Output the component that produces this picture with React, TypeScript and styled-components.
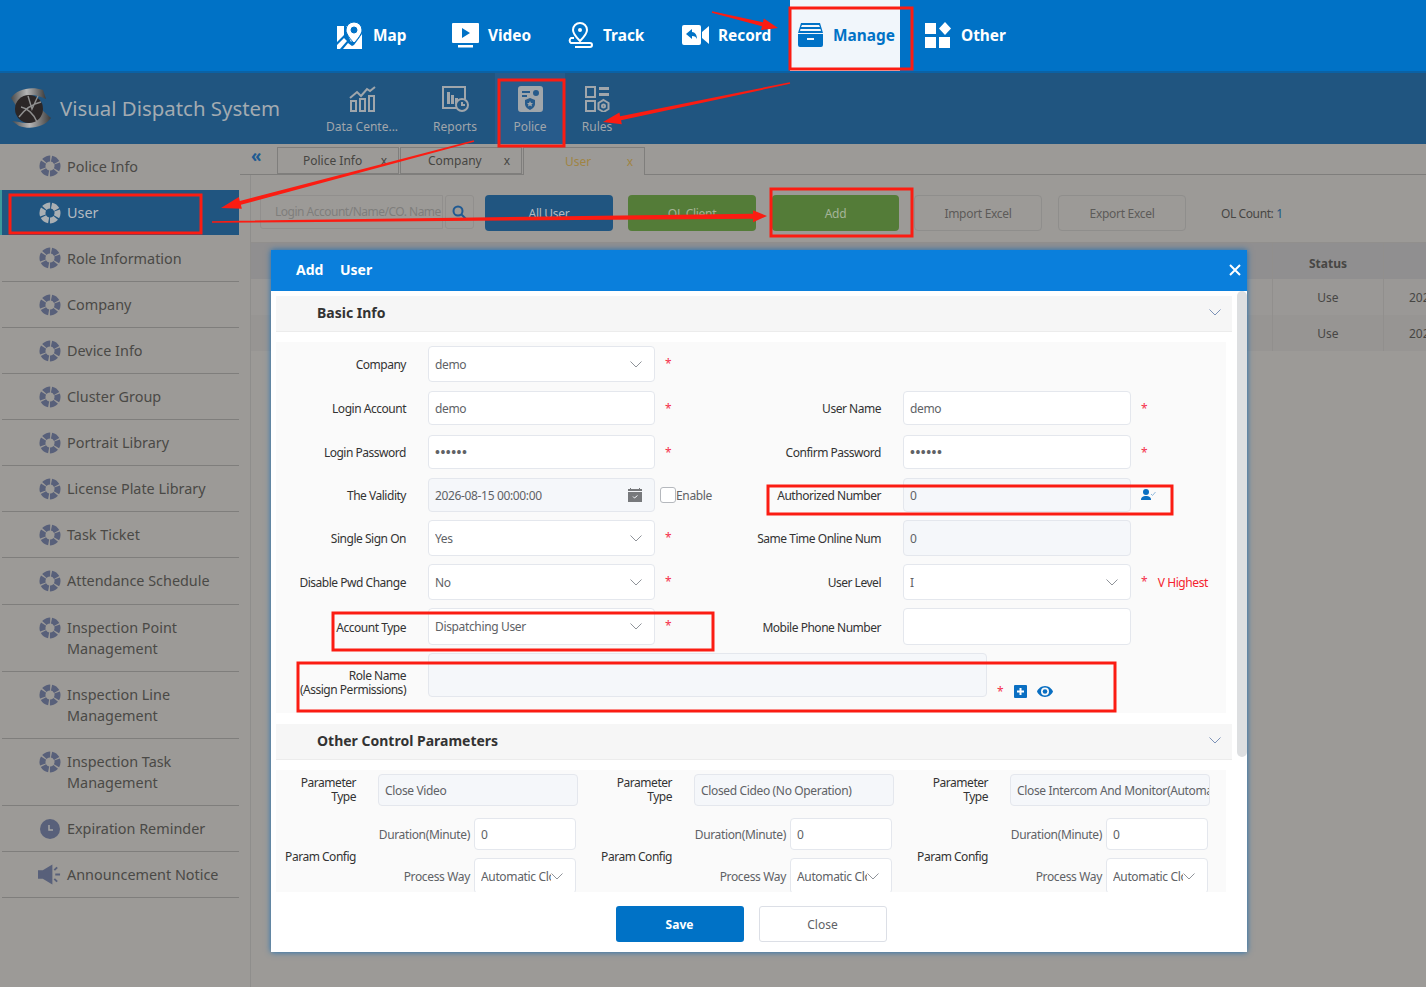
import styled, { createGlobalStyle } from 'styled-components';

const GlobalStyle = createGlobalStyle`
  html, body {
    margin: 0;
    padding: 0;
    overflow: hidden;
    background: #9c9a97;
    font-family: "Noto Sans", "Open Sans", sans-serif;
  }
  * {
    box-sizing: border-box;
  }
`;

const Page = styled.div`
  position: relative;
  width: 1426px;
  height: 987px;
  overflow: hidden;
  display: flex;
  flex-direction: column;
`;

const TopBar = styled.div`
  height: 73px;
  background: #0072c6;
  border-bottom: 2px solid #0a62a6;
  padding-left: 330px;
  display: flex;
`;

const NavItem = styled.div<{ $active?: boolean }>`
  display: flex;
  align-items: center;
  width: ${(p) => (p.$active ? '110px' : '115px')};
  margin-right: ${(p) => (p.$active ? '18px' : '0')};
  height: 71px;
  padding: 0 0 1px 7px;
  background: ${(p) => (p.$active ? '#f1f6fb' : 'transparent')};
  color: ${(p) => (p.$active ? '#0072c6' : '#fff')};
  font-size: 15.4px;
  font-weight: 700;
`;

const NavIcon = styled.span`
  width: 36px;
  display: flex;
  align-items: center;
`;

const SubBar = styled.div`
  height: 71px;
  background: #205580;
  display: flex;
`;

const Brand = styled.div`
  width: 316px;
  padding: 0 0 2px 9px;
  display: flex;
  align-items: center;
  gap: 9px;
  color: #a3abb1;
  font-size: 20.4px;
`;

const SubItem = styled.div<{ $w: number; $ml?: number; $active?: boolean }>`
  width: ${(p) => p.$w}px;
  margin-left: ${(p) => p.$ml ?? 0}px;
  background: ${(p) => (p.$active ? '#275b8b' : 'transparent')};
  display: flex;
  flex-direction: column;
  align-items: center;
  padding-top: 13px;
  color: #a0a6ab;
  font-size: 12px;
`;

const SubLabel = styled.span`
  margin-top: 6px;
  white-space: nowrap;
`;

const Main = styled.div`
  flex: 1;
  display: flex;
  background: #9c9a97;
`;

const Sidebar = styled.div`
  width: 240px;
  flex-shrink: 0;
`;

const SideItem = styled.div<{ $active?: boolean; $h: number; $plain?: boolean; $nudge?: number }>`
  height: ${(p) => p.$h}px;
  width: ${(p) => (p.$active ? '239px' : '237px')};
  margin-left: ${(p) => (p.$active ? '0' : '2px')};
  display: flex;
  align-items: ${(p) => (p.$h > 50 ? 'flex-start' : 'center')};
  padding-left: ${(p) => (p.$active ? '38px' : '36px')};
  padding-top: ${(p) => (p.$h > 50 ? 12 : p.$nudge && p.$nudge > 0 ? p.$nudge : 0)}px;
  padding-bottom: ${(p) => (p.$nudge && p.$nudge < 0 ? -p.$nudge : 0)}px;
  gap: 6px;
  font-size: 14.4px;
  line-height: 21px;
  color: ${(p) => (p.$active ? '#b4bac0' : '#4a4946')};
  background: ${(p) => (p.$active ? '#205580' : 'transparent')};
  border-bottom: ${(p) => (p.$plain || p.$active ? 'none' : '1px solid #7f7e7c')};
  box-shadow: ${(p) => (p.$active ? 'inset 2px 0 0 #3c9a9c' : 'none')};
`;

const SideIcon = styled.span`
  width: 23px;
  height: 22px;
  flex-shrink: 0;
  display: flex;
  align-items: center;
  justify-content: center;
`;

const SideText = styled.span`
  white-space: pre-line;
`;

const Content = styled.div`
  flex: 1;
  display: flex;
  flex-direction: column;
  min-width: 0;
`;

const TabRow = styled.div`
  height: 31px;
  padding: 3px 0 0 11px;
  border-bottom: 1px solid #7f7e7c;
  display: flex;
  gap: 1px;
`;

const Collapse = styled.span`
  width: 23px;
  margin-right: 2px;
  color: #205a92;
  font-size: 17px;
  font-weight: 700;
  line-height: 18px;
`;

const Tab = styled.div<{ $active?: boolean; $pl: number }>`
  width: 122px;
  height: ${(p) => (p.$active ? '28px' : '27px')};
  padding: 0 11px 0 ${(p) => p.$pl}px;
  display: flex;
  align-items: center;
  justify-content: space-between;
  font-size: 12px;
  color: ${(p) => (p.$active ? '#a08444' : '#464542')};
  background: #9c9a97;
  border: 1px solid #7f7e7c;
  border-bottom: ${(p) => (p.$active ? 'none' : '1px solid #7f7e7c')};
`;

const Panel = styled.div`
  flex: 1;
  margin-left: 10px;
  border-left: 1px solid #8f8e8c;
`;

const Toolbar = styled.div`
  margin-top: 20px;
  padding-left: 9px;
  height: 36px;
  display: flex;
  align-items: flex-start;
`;

const SearchBox = styled.div`
  width: 183px;
  height: 34px;
  padding-left: 14px;
  border: 1px solid #918f8d;
  border-radius: 3px 0 0 3px;
  color: #7f7e7c;
  font-size: 12px;
  letter-spacing: -0.5px;
  line-height: 32px;
  white-space: nowrap;
  overflow: hidden;
`;

const SearchButton = styled.div`
  width: 29px;
  height: 34px;
  margin-left: 2px;
  border: 1px solid #918f8d;
  border-radius: 3px;
  display: flex;
  align-items: center;
  justify-content: center;
`;

const ToolButton = styled.div<{ $bg?: string; $fg: string; $ml: number; $w?: number }>`
  width: ${(p) => p.$w ?? 128}px;
  height: 36px;
  margin-left: ${(p) => p.$ml}px;
  background: ${(p) => p.$bg ?? 'transparent'};
  border: ${(p) => (p.$bg ? 'none' : '1px solid #8f8e8c')};
  border-radius: 4px;
  color: ${(p) => p.$fg};
  font-size: 12px;
  letter-spacing: -0.3px;
  display: flex;
  align-items: center;
  justify-content: center;
`;

const OnlineCount = styled.div`
  margin-left: 35px;
  height: 36px;
  font-size: 12px;
  letter-spacing: -0.4px;
  line-height: 37px;
  color: #474644;

  b {
    font-weight: 400;
    color: #205580;
  }
`;

const Table = styled.div`
  margin-top: 11px;
  border-top: 1px solid #918f8d;
`;

const TableRow = styled.div<{ $head?: boolean; $alt?: boolean }>`
  height: 36px;
  display: flex;
  background: ${(p) => (p.$head ? '#908f90' : p.$alt ? '#979593' : '#9a9896')};
  font-size: 12px;
  font-weight: ${(p) => (p.$head ? 700 : 400)};
  color: #474644;
`;

const Spacer = styled.div`
  flex: 1;
`;

const Cell = styled.div<{ $w: number; $left?: boolean; $head?: boolean }>`
  width: ${(p) => p.$w}px;
  flex-shrink: 0;
  display: flex;
  align-items: center;
  justify-content: ${(p) => (p.$left ? 'flex-start' : 'center')};
  padding-left: ${(p) => (p.$left ? '25px' : '0')};
  padding-top: ${(p) => (p.$head ? '4px' : '0')};
  border-left: 1px solid #918f8d;
  white-space: nowrap;
  overflow: hidden;
`;

const Modal = styled.div`
  position: absolute;
  left: 271px;
  top: 250px;
  width: 976px;
  height: 702px;
  background: #fff;
  box-shadow: 0 0 6px #1b6fb5;
  display: flex;
  flex-direction: column;
`;

const ModalHeader = styled.div`
  height: 41px;
  flex-shrink: 0;
  background: #0a7fdc;
  color: #fff;
  padding: 0 5px 2px 25px;
  display: flex;
  align-items: center;
  justify-content: space-between;
  font-size: 14px;
  font-weight: 700;
  word-spacing: 0.5px;
  white-space: pre;
`;

const ModalBody = styled.div`
  position: relative;
  height: 601px;
  flex-shrink: 0;
  overflow: hidden;
  padding: 5px 15px 0 5px;
`;

const ScrollThumb = styled.div`
  position: absolute;
  right: 0;
  top: 0;
  width: 10px;
  height: 466px;
  background: #dddfe1;
  border-radius: 5px;
`;

const SectionHead = styled.div`
  height: 36px;
  padding: 0 11px 2px 41px;
  background: #f6f6f6;
  border-bottom: 1px solid #ececec;
  display: flex;
  align-items: center;
  justify-content: space-between;
  font-size: 14px;
  font-weight: 700;
  color: #333;
`;

const FormArea = styled.div<{ $mb?: number }>`
  margin: 10px 6px ${(p) => p.$mb ?? 0}px 0;
  padding: 4px 0 16px;
  background: #fafafa;
`;

const FormRow = styled.div<{ $h: number; $gap?: number }>`
  height: ${(p) => p.$h}px;
  margin-bottom: ${(p) => p.$gap ?? 8}px;
  display: flex;
`;

const LeftCell = styled.div`
  width: 445px;
  flex-shrink: 0;
  display: flex;
`;

const RightCell = styled.div`
  flex: 1;
  display: flex;
`;

const FieldLabel = styled.div<{ $w: number; $pt?: number }>`
  width: ${(p) => p.$w}px;
  margin-right: 22px;
  padding-top: ${(p) => p.$pt ?? 2}px;
  flex-shrink: 0;
  display: flex;
  align-items: center;
  justify-content: flex-end;
  text-align: right;
  font-size: 12px;
  letter-spacing: -0.48px;
  line-height: 14px;
  color: #333;
  white-space: pre-line;
`;

const Control = styled.div<{ $w: number; $off?: boolean; $flush?: boolean }>`
  width: ${(p) => p.$w}px;
  flex-shrink: 0;
  padding: 0 ${(p) => (p.$flush ? '0' : '12px')} 0 6px;
  background: ${(p) => (p.$off ? '#f5f7fa' : '#fff')};
  border: 1px solid #e4e7ed;
  border-radius: 4px;
  display: flex;
  align-items: center;
  justify-content: space-between;
  font-size: 12px;
  letter-spacing: -0.35px;
  color: #606266;
  white-space: nowrap;
  overflow: hidden;
`;

const ControlText = styled.span`
  overflow: hidden;
  flex: 1;
  min-width: 0;
`;

const Dots = styled.span`
  font-size: 13px;
  letter-spacing: 0.5px;
  font-weight: 700;
`;

const Star = styled.span`
  margin: 10px 0 0 10px;
  color: #f5304a;
  font-size: 12px;
  line-height: 16px;
`;

const Hint = styled.span`
  margin: 0 0 0 10px;
  align-self: center;
  color: #f5222d;
  font-size: 12px;
  letter-spacing: -0.4px;
`;

const EnableLabel = styled.label`
  margin-left: 5px;
  display: flex;
  align-items: center;
  font-size: 12px;
  letter-spacing: -0.35px;
  color: #606266;
`;

const CheckBox = styled.span`
  width: 16px;
  height: 16px;
  background: #fff;
  border: 1px solid #b5b8bd;
  border-radius: 3px;
`;

const RoleTools = styled.div`
  align-self: flex-end;
  margin: 0 0 -3px 10px;
  display: flex;
  align-items: center;
  gap: 10px;
`;

const RoleStar = styled.span`
  color: #f5304a;
  font-size: 12px;
`;

const ParamGrid = styled.div`
  margin: 10px 6px 0 0;
  padding-top: 4px;
  background: #fafafa;
  display: grid;
  grid-template-columns: repeat(3, 316px);
  height: 200px;
`;

const ParamCol = styled.div`
  display: flex;
  flex-direction: column;
`;

const ParamRow = styled.div`
  height: 32px;
  display: flex;
`;

const ConfigRow = styled.div`
  margin-top: 12px;
  display: flex;
`;

const ConfigFields = styled.div`
  display: flex;
  flex-direction: column;
  gap: 8px;
`;

const ConfigField = styled.div<{ $h: number }>`
  display: flex;
  height: ${(p) => p.$h}px;
`;

const ConfigFieldLabel = styled.div`
  width: 92px;
  margin-right: 4px;
  font-size: 12px;
  letter-spacing: -0.35px;
  display: flex;
  align-items: center;
  justify-content: flex-end;
  color: #606266;
  white-space: nowrap;
`;

const ConfigLabel = styled.div`
  width: 80px;
  margin: 32px 22px 0 0;
  text-align: right;
  font-size: 12px;
  letter-spacing: -0.48px;
  line-height: 14px;
  color: #333;
  white-space: nowrap;
`;

const ModalFooter = styled.div`
  flex: 1;
  display: flex;
  justify-content: center;
  padding: 14px 16px 0 0;
  gap: 15px;
`;

const FooterButton = styled.div<{ $primary?: boolean }>`
  width: 128px;
  height: 36px;
  border-radius: 3px;
  background: ${(p) => (p.$primary ? '#0072c6' : '#fff')};
  border: ${(p) => (p.$primary ? 'none' : '1px solid #dcdfe6')};
  color: ${(p) => (p.$primary ? '#fff' : '#606266')};
  font-size: 12px;
  font-weight: ${(p) => (p.$primary ? 700 : 400)};
  display: flex;
  align-items: center;
  justify-content: center;
`;

const Annotations = styled.svg`
  position: absolute;
  left: 0;
  top: 0;
  pointer-events: none;
`;

const MapIcon = () => (
  <svg width="26" height="27" viewBox="0 0 26 27" fill="#fff">
    <path d="M0 4h7v9L0 20zM0 23l7-7 3 3-7 8H0zM9 4l3 0 5 11 0 1-3 4-5-11zM6 27l5-6 4 3 2-1 3-4 5-7v15z" />
    <path fillRule="evenodd" d="M17 0a8 8 0 0 1 8 8c0 4-5 10-8 13-3-3-8-9-8-13a8 8 0 0 1 8-8zm0 5a3 3 0 1 0 0 6 3 3 0 0 0 0-6z" stroke="#0072c6" strokeWidth="1" />
  </svg>
);

const VideoIcon = () => (
  <svg width="27" height="25" viewBox="0 0 27 25" fill="#fff">
    <path fillRule="evenodd" d="M1 0h25a1 1 0 0 1 1 1v18a1 1 0 0 1-1 1H1a1 1 0 0 1-1-1V1a1 1 0 0 1 1-1zm9 5v10l8-5z" />
    <rect x="6" y="22" width="15" height="2.5" />
  </svg>
);

const TrackIcon = () => (
  <svg width="27" height="27" viewBox="0 0 27 27" fill="none" stroke="#fff" strokeWidth="2">
    <path d="M13 1a7 7 0 0 1 7 7c0 4-4 8-7 11-3-3-7-7-7-11a7 7 0 0 1 7-7z" />
    <circle cx="13" cy="8" r="2" fill="#fff" stroke="none" />
    <path d="M7 17H4a3 3 0 0 0 0 5h19a2 2 0 0 1 0 4H8" transform="translate(0 -1)" />
  </svg>
);

const RecordIcon = () => (
  <svg width="27" height="22" viewBox="0 0 27 22" fill="#fff">
    <path fillRule="evenodd" d="M2 1h15a2 2 0 0 1 2 2v16a2 2 0 0 1-2 2H2a2 2 0 0 1-2-2V3a2 2 0 0 1 2-2zm8 4L4 10l6 5v-3c3 0 4 1 5 3 0-4-2-7-5-7z" />
    <path d="M20 8l7-6v18l-7-6z" />
  </svg>
);

const ManageIcon = () => (
  <svg width="27" height="24" viewBox="0 0 27 24" fill="#0072c6">
    <path fillRule="evenodd" d="M4 0h19l3 10H1zm1 2-1 2h19l-1-2zM3.500 6l-.5 2h21l-.5-2z" />
    <path fillRule="evenodd" d="M1 11h25v11a2 2 0 0 1-2 2H3a2 2 0 0 1-2-2zm9 4v2h7v-2z" />
  </svg>
);

const OtherIcon = () => (
  <svg width="26" height="26" viewBox="0 0 26 26" fill="#fff">
    <rect x="0" y="1" width="11" height="11" />
    <path d="M20 0l6 6.500-6 6.500-6-6.500z" />
    <rect x="0" y="15" width="11" height="11" />
    <rect x="14" y="15" width="11" height="11" />
  </svg>
);

const LogoMark = () => (
  <svg width="42" height="42" viewBox="0 0 42 42">
    <defs>
      <linearGradient id="chrome" x1="0" y1="0" x2="1" y2="0">
        <stop offset="0" stopColor="#4a4a4a" />
        <stop offset="0.45" stopColor="#b5b5b5" />
        <stop offset="1" stopColor="#3a3a3a" />
      </linearGradient>
    </defs>
    <path d="M2 11C8 2 22-1 34 3l3 9-5-2C22 6 12 9 8 20z" fill="url(#chrome)" />
    <path d="M42 31c-7 9-20 12-32 8l-7-5 7 1c10 3 19 0 23-12z" fill="url(#chrome)" />
    <circle cx="20" cy="22" r="14" fill="#2b2626" />
    <path d="M10 30c6-8 13-13 22-15M12 20c6 1 13 7 16 15M19 9l4 13 6-13" fill="none" stroke="#8f8f8f" strokeWidth="1.400" />
  </svg>
);

const DataIcon = () => (
  <svg width="27" height="26" viewBox="0 0 27 26" fill="none" stroke="#a0a6ab" strokeWidth="2">
    <path d="M1 12l7-6 4 4 6-7 3 2 5-4" />
    <rect x="2" y="15" width="5" height="10" />
    <rect x="11" y="13" width="5" height="12" />
    <rect x="20" y="10" width="5" height="15" />
  </svg>
);

const ReportsIcon = () => (
  <svg width="27" height="26" viewBox="0 0 27 26" fill="none" stroke="#a0a6ab" strokeWidth="2">
    <path d="M14 22H1V1h22v12" />
    <rect x="5" y="6" width="3" height="12" fill="#a0a6ab" stroke="none" />
    <rect x="9" y="9" width="3" height="9" fill="#a0a6ab" stroke="none" />
    <rect x="13" y="12" width="3" height="6" fill="#a0a6ab" stroke="none" />
    <circle cx="20" cy="19" r="6" fill="#205580" />
    <path d="M20 16v3h3" />
  </svg>
);

const PoliceIcon = () => (
  <svg width="25" height="26" viewBox="0 0 25 26">
    <path fillRule="evenodd" fill="#a0a6ab" d="M3 0h19a3 3 0 0 1 3 3v20a3 3 0 0 1-3 3H3a3 3 0 0 1-3-3V3a3 3 0 0 1 3-3zm15 4a3 3 0 1 0 0 6 3 3 0 0 0 0-6zM4 5v2h8V5zm0 4v2h5V9zm8 3-5 2v4c0 3 3 5 5 6 2-1 5-3 5-6v-4z" />
    <path fill="#a0a6ab" d="M12 15l1 2h2l-1.500 1.500.5 2-2-1-2 1 .5-2L9 17h2z" />
  </svg>
);

const RulesIcon = () => (
  <svg width="25" height="26" viewBox="0 0 25 26" fill="none" stroke="#a0a6ab" strokeWidth="2">
    <rect x="1" y="1" width="9" height="10" />
    <rect x="1" y="15" width="9" height="10" />
    <rect x="14" y="1" width="10" height="3" fill="#a0a6ab" stroke="none" />
    <rect x="14" y="7" width="10" height="3" fill="#a0a6ab" stroke="none" />
    <path d="M18.500 14l5 3v6l-5 3-5-3v-6z" />
    <circle cx="18.500" cy="20" r="1.500" />
  </svg>
);

const RingIcon = ({ color }: { color: string }) => (
  <svg width="22" height="22" viewBox="0 0 22 22" fill="none">
    <circle cx="11" cy="11" r="7.500" stroke={color} strokeWidth="6" strokeDasharray="6.500 1.350" transform="rotate(-20 11 11)" />
  </svg>
);

const ClockIcon = () => (
  <svg width="20" height="20" viewBox="0 0 20 20">
    <circle cx="10" cy="10" r="10" fill="#58607a" />
    <path d="M9 6v5h4" fill="none" stroke="#a5a5a5" strokeWidth="1.500" />
  </svg>
);

const SpeakerIcon = () => (
  <svg width="24" height="21" viewBox="0 0 24 21" fill="#58607a">
    <path d="M0 6h5l10-6v21L5 15H0z" />
    <path d="M17 6l3-3M18 10.500h5M17 15l3 3" stroke="#58607a" strokeWidth="2" />
  </svg>
);

const SearchIcon = () => (
  <svg width="15" height="15" viewBox="0 0 15 15" fill="none" stroke="#205a92" strokeWidth="2">
    <circle cx="6" cy="6" r="4.500" />
    <path d="M9.500 9.500L14 14" />
  </svg>
);

const ChevronMark = styled.svg`
  flex-shrink: 0;
`;

const Chevron = ({ color = '#8f9399' }: { color?: string }) => (
  <ChevronMark width="12" height="7" viewBox="0 0 12 7" fill="none" stroke={color} strokeWidth="1">
    <path d="M0.500 0.500L6 6l5.500-5.500" />
  </ChevronMark>
);

const CalendarIcon = () => (
  <svg width="14" height="14" viewBox="0 0 14 14">
    <path d="M2 0h1v1h8V0h1v1h2v13H0V1h2z" fill="#77797c" />
    <rect x="0" y="3" width="14" height="1" fill="#f5f7fa" />
    <path d="M5 8.500l1.500 1.500L9.500 7.500" fill="none" stroke="#f5f7fa" strokeWidth="1" />
  </svg>
);

const UserCheckIcon = () => (
  <svg width="15" height="11" viewBox="0 0 15 11">
    <circle cx="5" cy="3" r="3" fill="#0a6fc2" />
    <path d="M0 11c0-3 2-4 5-4s5 1 5 4z" fill="#0a6fc2" />
    <path d="M10 5l1.500 1.500L14.500 3" fill="none" stroke="#8fb8dc" strokeWidth="1" />
  </svg>
);

const PlusBox = () => (
  <svg width="13" height="13" viewBox="0 0 13 13">
    <rect width="13" height="13" rx="1" fill="#0a6fc2" />
    <path d="M6.500 3v7M3 6.500h7" stroke="#fff" strokeWidth="2" />
  </svg>
);

const EyeIcon = () => (
  <svg width="16" height="11" viewBox="0 0 16 11">
    <path fillRule="evenodd" fill="#0a6fc2" d="M8 0c4 0 7 3 8 5.500C15 8 12 11 8 11S1 8 0 5.500C1 3 4 0 8 0zm0 1.500a4 4 0 1 0 0 8 4 4 0 0 0 0-8z" />
    <circle cx="8" cy="5.500" r="2.300" fill="#0a6fc2" />
  </svg>
);

// tapered red arrow, thin at the tail
const Arrow = ({ x1, y1, x2, y2, w = 3, hl = 18, hw = 7 }: { x1: number; y1: number; x2: number; y2: number; w?: number; hl?: number; hw?: number }) => {
  const len = Math.hypot(x2 - x1, y2 - y1);
  const ux = (x2 - x1) / len;
  const uy = (y2 - y1) / len;
  const nx = -uy;
  const ny = ux;
  const bx = x2 - ux * hl;
  const by = y2 - uy * hl;
  const tail = 0.8;
  const pts = [
    [x1 + nx * tail, y1 + ny * tail],
    [bx + nx * w, by + ny * w],
    [bx + nx * hw, by + ny * hw],
    [x2, y2],
    [bx - nx * hw, by - ny * hw],
    [bx - nx * w, by - ny * w],
    [x1 - nx * tail, y1 - ny * tail],
  ];
  return <polygon points={pts.map((p) => p.join(',')).join(' ')} fill="#fb1c12" />;
};

const boxes = [
  { x: 790, y: 8, w: 122, h: 61 },
  { x: 499, y: 80, w: 65, h: 66 },
  { x: 10, y: 195, w: 191, h: 38 },
  { x: 771, y: 189, w: 141, h: 47 },
  { x: 768, y: 486, w: 404, h: 28 },
  { x: 333, y: 613, w: 380, h: 37 },
  { x: 298, y: 663, w: 817, h: 48 },
];

const sideItems = [
  { label: 'Police Info', h: 46, plain: true, nudge: -2 },
  { label: 'User', h: 45, active: true },
  { label: 'Role Information', h: 47 },
  { label: 'Company', h: 46 },
  { label: 'Device Info', h: 46 },
  { label: 'Cluster Group', h: 46 },
  { label: 'Portrait Library', h: 46 },
  { label: 'License Plate Library', h: 46 },
  { label: 'Task Ticket', h: 46 },
  { label: 'Attendance Schedule', h: 47, nudge: -1 },
  { label: 'Inspection Point\nManagement', h: 67 },
  { label: 'Inspection Line\nManagement', h: 67 },
  { label: 'Inspection Task\nManagement', h: 67 },
  { label: 'Expiration Reminder', h: 46, icon: 'clock' },
  { label: 'Announcement Notice', h: 46, icon: 'speaker' },
];

const params = ['Close Video', 'Closed Cideo (No Operation)', 'Close Intercom And Monitor(Automatic)'];

const App = () => {
  return (
    <Page>
      <GlobalStyle />
      <TopBar>
        <NavItem><NavIcon><MapIcon /></NavIcon>Map</NavItem>
        <NavItem><NavIcon><VideoIcon /></NavIcon>Video</NavItem>
        <NavItem><NavIcon><TrackIcon /></NavIcon>Track</NavItem>
        <NavItem><NavIcon><RecordIcon /></NavIcon>Record</NavItem>
        <NavItem $active><NavIcon><ManageIcon /></NavIcon>Manage</NavItem>
        <NavItem><NavIcon><OtherIcon /></NavIcon>Other</NavItem>
      </TopBar>
      <SubBar>
        <Brand><LogoMark />Visual Dispatch System</Brand>
        <SubItem $w={92}><DataIcon /><SubLabel>Data Cente...</SubLabel></SubItem>
        <SubItem $w={80} $ml={7}><ReportsIcon /><SubLabel>Reports</SubLabel></SubItem>
        <SubItem $w={70} $active><PoliceIcon /><SubLabel>Police</SubLabel></SubItem>
        <SubItem $w={64}><RulesIcon /><SubLabel>Rules</SubLabel></SubItem>
      </SubBar>
      <Main>
        <Sidebar>
          {sideItems.map((item) => (
            <SideItem key={item.label} $h={item.h} $active={item.active} $plain={item.plain} $nudge={item.nudge}>
              <SideIcon>
                {item.icon === 'clock' ? <ClockIcon /> : item.icon === 'speaker' ? <SpeakerIcon /> : <RingIcon color={item.active ? '#a9afb3' : '#58607a'} />}
              </SideIcon>
              <SideText>{item.label}</SideText>
            </SideItem>
          ))}
        </Sidebar>
        <Content>
          <TabRow>
            <Collapse>«</Collapse>
            <Tab $pl={25}>Police Info<span>x</span></Tab>
            <Tab $pl={27}>Company<span>x</span></Tab>
            <Tab $active $pl={41}>User<span>x</span></Tab>
          </TabRow>
          <Panel>
            <Toolbar>
              <SearchBox>Login Account/Name/CO. Name</SearchBox>
              <SearchButton><SearchIcon /></SearchButton>
              <ToolButton $bg="#205580" $fg="#b4bac0" $ml={11}>All User</ToolButton>
              <ToolButton $bg="#547c38" $fg="#a5b498" $ml={15}>OL Client</ToolButton>
              <ToolButton $bg="#547c38" $fg="#a5b498" $ml={16} $w={127}>Add</ToolButton>
              <ToolButton $fg="#5c5b59" $ml={15}>Import Excel</ToolButton>
              <ToolButton $fg="#5c5b59" $ml={16}>Export Excel</ToolButton>
              <OnlineCount>OL Count: <b>1</b></OnlineCount>
            </Toolbar>
            <Table>
              <TableRow $head>
                <Spacer />
                <Cell $w={111} $head>Status</Cell>
                <Cell $w={43} />
              </TableRow>
              <TableRow>
                <Spacer />
                <Cell $w={111}>Use</Cell>
                <Cell $w={43} $left>2026-08-15</Cell>
              </TableRow>
              <TableRow $alt>
                <Spacer />
                <Cell $w={111}>Use</Cell>
                <Cell $w={43} $left>2026-08-15</Cell>
              </TableRow>
            </Table>
          </Panel>
        </Content>
      </Main>

      <Modal>
        <ModalHeader>
          {'Add    User'}
          <svg width="14" height="14" viewBox="0 0 14 14" stroke="#fff" strokeWidth="2">
            <path d="M2 2l10 10M12 2L2 12" />
          </svg>
        </ModalHeader>
        <ModalBody>
          <ScrollThumb />
          <SectionHead>Basic Info<Chevron color="#7d93b8" /></SectionHead>
          <FormArea $mb={11}>
            <FormRow $h={36} $gap={9}>
              <LeftCell>
                <FieldLabel $w={130}>Company</FieldLabel>
                <Control $w={227}><ControlText>demo</ControlText><Chevron /></Control>
                <Star>*</Star>
              </LeftCell>
            </FormRow>
            <FormRow $h={34} $gap={10}>
              <LeftCell>
                <FieldLabel $w={130}>Login Account</FieldLabel>
                <Control $w={227}>demo</Control>
                <Star>*</Star>
              </LeftCell>
              <RightCell>
                <FieldLabel $w={160}>User Name</FieldLabel>
                <Control $w={228}>demo</Control>
                <Star>*</Star>
              </RightCell>
            </FormRow>
            <FormRow $h={34} $gap={9}>
              <LeftCell>
                <FieldLabel $w={130}>Login Password</FieldLabel>
                <Control $w={227}><Dots>••••••</Dots></Control>
                <Star>*</Star>
              </LeftCell>
              <RightCell>
                <FieldLabel $w={160}>Confirm Password</FieldLabel>
                <Control $w={228}><Dots>••••••</Dots></Control>
                <Star>*</Star>
              </RightCell>
            </FormRow>
            <FormRow $h={34}>
              <LeftCell>
                <FieldLabel $w={130}>The Validity</FieldLabel>
                <Control $w={227} $off>2026-08-15 00:00:00<CalendarIcon /></Control>
                <EnableLabel><CheckBox />Enable</EnableLabel>
              </LeftCell>
              <RightCell>
                <FieldLabel $w={160}>Authorized Number</FieldLabel>
                <Control $w={228} $off>0</Control>
                <Hint><UserCheckIcon /></Hint>
              </RightCell>
            </FormRow>
            <FormRow $h={36}>
              <LeftCell>
                <FieldLabel $w={130}>Single Sign On</FieldLabel>
                <Control $w={227}><ControlText>Yes</ControlText><Chevron /></Control>
                <Star>*</Star>
              </LeftCell>
              <RightCell>
                <FieldLabel $w={160}>Same Time Online Num</FieldLabel>
                <Control $w={228} $off>0</Control>
              </RightCell>
            </FormRow>
            <FormRow $h={36}>
              <LeftCell>
                <FieldLabel $w={130}>Disable Pwd Change</FieldLabel>
                <Control $w={227}><ControlText>No</ControlText><Chevron /></Control>
                <Star>*</Star>
              </LeftCell>
              <RightCell>
                <FieldLabel $w={160}>User Level</FieldLabel>
                <Control $w={228}><ControlText>I</ControlText><Chevron /></Control>
                <Star>*</Star>
                <Hint>V Highest</Hint>
              </RightCell>
            </FormRow>
            <FormRow $h={37}>
              <LeftCell>
                <FieldLabel $w={130}>Account Type</FieldLabel>
                <Control $w={227}><ControlText>Dispatching User</ControlText><Chevron /></Control>
                <Star>*</Star>
              </LeftCell>
              <RightCell>
                <FieldLabel $w={160}>Mobile Phone Number</FieldLabel>
                <Control $w={228} />
              </RightCell>
            </FormRow>
            <FormRow $h={44} $gap={0}>
              <FieldLabel $w={130} $pt={16}>{'Role Name\n(Assign Permissions)'}</FieldLabel>
              <Control $w={559} $off />
              <RoleTools>
                <RoleStar>*</RoleStar>
                <PlusBox />
                <EyeIcon />
              </RoleTools>
            </FormRow>
          </FormArea>
          <SectionHead>Other Control Parameters<Chevron color="#7d93b8" /></SectionHead>
          <ParamGrid>
            {params.map((param) => (
              <ParamCol key={param}>
                <ParamRow>
                  <FieldLabel $w={80} $pt={0}>{'Parameter\nType'}</FieldLabel>
                  <Control $w={200} $off $flush><ControlText>{param}</ControlText></Control>
                </ParamRow>
                <ConfigRow>
                  <ConfigLabel>Param Config</ConfigLabel>
                  <ConfigFields>
                    <ConfigField $h={32}>
                      <ConfigFieldLabel>Duration(Minute)</ConfigFieldLabel>
                      <Control $w={102}>0</Control>
                    </ConfigField>
                    <ConfigField $h={36}>
                      <ConfigFieldLabel>Process Way</ConfigFieldLabel>
                      <Control $w={102}><ControlText>Automatic Close</ControlText><Chevron /></Control>
                    </ConfigField>
                  </ConfigFields>
                </ConfigRow>
              </ParamCol>
            ))}
          </ParamGrid>
        </ModalBody>
        <ModalFooter>
          <FooterButton $primary>Save</FooterButton>
          <FooterButton>Close</FooterButton>
        </ModalFooter>
      </Modal>

      <Annotations width="1426" height="987" viewBox="0 0 1426 987">
        {boxes.map((b) => (
          <rect key={b.x} x={b.x} y={b.y} width={b.w} height={b.h} fill="none" stroke="#fb1c12" strokeWidth="3" />
        ))}
        <Arrow x1={712} y1={12} x2={778} y2={28} w={2} hl={16} hw={6} />
        <Arrow x1={790} y1={83} x2={603} y2={122} w={2} hl={18} hw={6} />
        <Arrow x1={474} y1={141} x2={221} y2={208} w={2} hl={20} hw={6} />
        <Arrow x1={212} y1={222} x2={767} y2={216} w={2.500} hl={14} hw={6} />
      </Annotations>
    </Page>
  );
};

export default App;
